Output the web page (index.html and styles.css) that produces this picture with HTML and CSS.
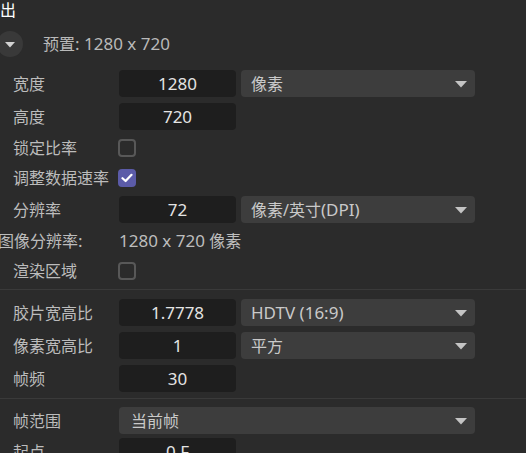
FILE: index.html
```html
<!DOCTYPE html>
<html lang="zh-CN">
<head>
<meta charset="utf-8">
<title>输出</title>
<link rel="stylesheet" href="styles.css">
</head>
<body>
<div class="panel">
  <div class="title">输出</div>
  <div class="preset">
    <span class="circle"><svg width="10" height="6" viewBox="0 0 10 6"><polygon points="0,0 10,0 5,5.5" fill="#d2d2d2"/></svg></span>
    <span class="preset-text">预置<span class="lat">: 1280 x 720</span></span>
  </div>

  <div class="group g1">
    <div class="row tall">
      <span class="label">宽度</span>
      <span class="field">1280</span>
      <span class="select"><span>像素</span><svg class="tri" width="12" height="7" viewBox="0 0 12 7"><polygon points="0,0 12,0 6,6.5" fill="#c4c4c4"/></svg></span>
    </div>
    <div class="row tall">
      <span class="label">高度</span>
      <span class="field">720</span>
    </div>
    <div class="row short">
      <span class="label">锁定比率</span>
      <span class="check"></span>
    </div>
    <div class="row short">
      <span class="label">调整数据速率</span>
      <span class="check on"><svg width="12" height="10" viewBox="0 0 12 10"><polyline points="1.5,5.2 4.6,8 10.5,1.8" fill="none" stroke="#ffffff" stroke-width="2.2" stroke-linecap="round" stroke-linejoin="round"/></svg></span>
    </div>
    <div class="row tall">
      <span class="label">分辨率</span>
      <span class="field">72</span>
      <span class="select"><span>像素/英寸<span class="lat">(DPI)</span></span><svg class="tri" width="12" height="7" viewBox="0 0 12 7"><polygon points="0,0 12,0 6,6.5" fill="#c4c4c4"/></svg></span>
    </div>
    <div class="row short">
      <span class="label wide">图像分辨率<span class="lat">:</span></span>
      <span class="info"><span class="lat">1280 x 720 </span>像素</span>
    </div>
    <div class="row short">
      <span class="label">渲染区域</span>
      <span class="check"></span>
    </div>
  </div>

  <div class="group g2">
    <div class="row tall">
      <span class="label">胶片宽高比</span>
      <span class="field">1.7778</span>
      <span class="select"><span class="lat">HDTV (16:9)</span><svg class="tri" width="12" height="7" viewBox="0 0 12 7"><polygon points="0,0 12,0 6,6.5" fill="#c4c4c4"/></svg></span>
    </div>
    <div class="row tall">
      <span class="label">像素宽高比</span>
      <span class="field">1</span>
      <span class="select"><span>平方</span><svg class="tri" width="12" height="7" viewBox="0 0 12 7"><polygon points="0,0 12,0 6,6.5" fill="#c4c4c4"/></svg></span>
    </div>
    <div class="row tall">
      <span class="label">帧频</span>
      <span class="field">30</span>
    </div>
  </div>

  <div class="group g3">
    <div class="row tall">
      <span class="label">帧范围</span>
      <span class="select span"><span>当前帧</span><svg class="tri" width="12" height="7" viewBox="0 0 12 7"><polygon points="0,0 12,0 6,6.5" fill="#c4c4c4"/></svg></span>
    </div>
    <div class="row tall">
      <span class="label">起点</span>
      <span class="field">0 F</span>
    </div>
  </div>
</div>
</body>
</html>
```

FILE: styles.css
```css
html, body {
  margin: 0;
  padding: 0;
  background: #2b2b2b;
  overflow: hidden;
  height: 100%;
}

body {
  font-family: "Noto Sans", "Noto Sans CJK SC", sans-serif;
  font-size: 16px;
  color: #bdbdbd;
}

.panel {
  width: 526px;
}

.lat {
  font-size: 17px;
}

.title {
  height: 21px;
  line-height: 21px;
  color: #ffffff;
  margin-left: -16px;
  white-space: nowrap;
}

.preset {
  display: flex;
  align-items: center;
  height: 26px;
  margin-top: 10px;
}

.circle {
  width: 26px;
  height: 26px;
  border-radius: 50%;
  background: #393939;
  margin-left: -3px;
  display: flex;
  align-items: center;
  justify-content: center;
}

.circle svg {
  display: block;
  margin-top: 1px;
}

.preset-text {
  margin-left: 20px;
  line-height: 20px;
  color: #b9b9b9;
}

.group {
  display: flex;
  flex-direction: column;
  gap: 6px;
  padding-left: 13px;
}

.g1 {
  padding-top: 13px;
  padding-bottom: 6px;
  border-bottom: 1px solid #3a3a3a;
}

.g2 {
  padding-top: 9px;
  padding-bottom: 6px;
  border-bottom: 1px solid #3a3a3a;
}

.g3 {
  padding-top: 8px;
  gap: 4px;
}

.row {
  display: grid;
  grid-template-columns: 106px 117px 239px;
  align-items: center;
}

.row.tall {
  height: 27px;
}

.row.short {
  height: 24px;
}

.label {
  line-height: 20px;
  white-space: nowrap;
  color: #bcbcbc;
}

.label.wide {
  margin-left: -15px;
}

.field {
  height: 27px;
  line-height: 27px;
  background: #1e1e1e;
  border-radius: 4px;
  text-align: center;
  color: #e4e4e4;
  font-size: 17px;
}

.select {
  height: 27px;
  margin-left: 5px;
  background: #3d3d3d;
  border-radius: 4px;
  display: flex;
  align-items: center;
  justify-content: space-between;
  padding: 0 8px 0 10px;
  color: #c9c9c9;
  white-space: nowrap;
}

.select > span {
  line-height: 20px;
}

.select.span {
  grid-column: 2 / 4;
  margin-left: 0;
  padding-left: 12px;
}

.tri {
  display: block;
  margin-top: 2px;
}

.check {
  box-sizing: border-box;
  width: 18px;
  height: 18px;
  margin-left: -1px;
  border: 2px solid #585858;
  border-radius: 4px;
  display: flex;
  align-items: center;
  justify-content: center;
}

.check.on {
  border: none;
  background: #5b5ba8;
}

.check svg {
  display: block;
}

.info {
  grid-column: 2 / 4;
  line-height: 20px;
  color: #bdbdbd;
  white-space: nowrap;
}
```
